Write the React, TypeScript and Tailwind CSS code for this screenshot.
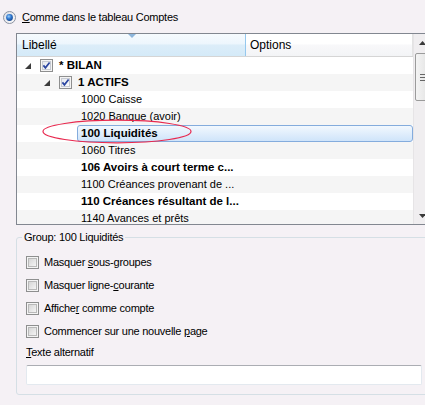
import React from "react";

type Row = {
  level: number;
  label: string;
  bold?: boolean;
  expander?: boolean;
  check?: boolean;
  selected?: boolean;
};

const rows: Row[] = [
  { level: 0, label: "* BILAN", bold: true, expander: true, check: true },
  { level: 1, label: "1 ACTIFS", bold: true, expander: true, check: true },
  { level: 2, label: "1000 Caisse" },
  { level: 2, label: "1020 Banque (avoir)" },
  { level: 2, label: "100 Liquidités", bold: true, selected: true },
  { level: 2, label: "1060 Titres" },
  { level: 2, label: "106 Avoirs à court terme c...", bold: true },
  { level: 2, label: "1100 Créances provenant de ..." },
  { level: 2, label: "110 Créances résultant de l...", bold: true },
  { level: 2, label: "1140 Avances et prêts" },
];

const FONT = { fontFamily: '"Liberation Sans", Arial, sans-serif' };

function Expander() {
  return (
    <svg width="6" height="6" viewBox="0 0 6 6" className="shrink-0">
      <path d="M6 0 L6 6 L0 6 Z" fill="#3c3c3c" />
    </svg>
  );
}

function TreeCheck() {
  return (
    <svg width="13" height="13" viewBox="0 0 13 13" className="shrink-0">
      <defs>
        <linearGradient id="tcg" x1="0" y1="0" x2="1" y2="1">
          <stop offset="0" stopColor="#e4e7ee" />
          <stop offset="1" stopColor="#fbfbfc" />
        </linearGradient>
      </defs>
      <rect x="0.5" y="0.5" width="12" height="12" fill="#f4f4f4" stroke="#8e8f8f" />
      <rect x="2.5" y="2.5" width="8" height="8" fill="url(#tcg)" stroke="#c6cad2" />
      <path d="M3.4 6.4 L5.4 8.8 L9.6 3.4" fill="none" stroke="#2a45a0" strokeWidth="1.7" />
    </svg>
  );
}

function Box() {
  return (
    <svg width="13" height="13" viewBox="0 0 13 13" className="shrink-0">
      <defs>
        <linearGradient id="bxg" x1="0" y1="0" x2="1" y2="1">
          <stop offset="0" stopColor="#d4d4d4" />
          <stop offset="1" stopColor="#f6f6f6" />
        </linearGradient>
      </defs>
      <rect x="0.5" y="0.5" width="12" height="12" fill="#f4f4f4" stroke="#8e8f8f" />
      <rect x="2.5" y="2.5" width="8" height="8" fill="url(#bxg)" stroke="#b9b9b9" />
    </svg>
  );
}

function Radio() {
  return (
    <svg width="13" height="13" viewBox="0 0 13 13" className="shrink-0">
      <defs>
        <radialGradient id="rdg" cx="0.4" cy="0.35" r="0.7">
          <stop offset="0" stopColor="#9cd0fb" />
          <stop offset="0.5" stopColor="#2f78d0" />
          <stop offset="1" stopColor="#18458c" />
        </radialGradient>
        <linearGradient id="rog" x1="0" y1="0" x2="1" y2="1">
          <stop offset="0" stopColor="#dcdfe6" />
          <stop offset="1" stopColor="#fbfbfb" />
        </linearGradient>
      </defs>
      <circle cx="6.5" cy="6.5" r="6" fill="url(#rog)" stroke="#8a92a0" />
      <circle cx="6.5" cy="6.5" r="3.4" fill="url(#rdg)" />
    </svg>
  );
}

export default function App() {
  return (
    <div
      className="relative w-[425px] h-[405px] overflow-hidden bg-[#f5f1f5] text-black flex flex-col"
      style={FONT}
    >
      {/* radio row */}
      <div className="h-[33px] flex items-start pt-[11px] pl-[3px] shrink-0">
        <Radio />
        <span className="ml-[6px] text-[11px] leading-[13px] tracking-[-0.25px]">
          <span className="underline">C</span>omme dans le tableau Comptes
        </span>
      </div>

      {/* list */}
      <div className="ml-[16px] w-[415px] h-[192px] shrink-0 border border-[#828790] bg-white flex">
        <div className="w-[396px] flex flex-col overflow-hidden">
          <div className="h-[23px] shrink-0 flex border-b border-[#d5d5d5] text-[12px]">
            <div className="relative w-[229px] flex items-center pl-[5px] border-r border-[#95c8ee] bg-[linear-gradient(to_bottom,#f6fbfe_0%,#edf6fd_45%,#dcedf9_50%,#d4eaf8_100%)]">
              <svg width="8" height="4" viewBox="0 0 8 4" className="absolute left-[111px] top-0">
                <path d="M0 0 L8 0 L4 4 Z" fill="#8db6dc" />
              </svg>
              Libellé
            </div>
            <div className="flex-1 flex items-center pl-[4px] border-r border-[#e3e3e3] bg-[linear-gradient(to_bottom,#ffffff_0%,#ffffff_45%,#f8f8fa_50%,#f3f4f6_100%)]">
              Options
            </div>
          </div>
          {rows.map((r, i) => {
            const bg = i % 2 === 0 ? "bg-white" : "bg-[#f5f5f5]";
            if (r.level < 2) {
              return (
                <div
                  key={i}
                  className={`h-[17px] shrink-0 flex items-center ${bg} ${
                    r.level === 0 ? "pl-[8px]" : "pl-[27px]"
                  }`}
                >
                  <Expander />
                  <span className="ml-[9px]">
                    <TreeCheck />
                  </span>
                  <span className="ml-[6px] text-[11.5px] font-bold leading-[17px] whitespace-nowrap">
                    {r.label}
                  </span>
                </div>
              );
            }
            return (
              <div key={i} className={`h-[17px] shrink-0 flex ${bg} pl-[60px]`}>
                <div
                  className={`flex-1 flex items-center pl-[3px] border whitespace-nowrap ${
                    r.selected
                      ? "rounded-[3px] border-[#84acdd] bg-[linear-gradient(to_bottom,#f2f8fe,#cfe4fa)]"
                      : "border-transparent"
                  } ${r.bold ? "text-[11.5px] font-bold" : "text-[11px]"}`}
                >
                  {r.label}
                </div>
              </div>
            );
          })}
        </div>
        {/* scrollbar */}
        <div className="w-[17px] shrink-0 flex flex-col bg-[#f0eef0] border-l border-[#e6e4e6]">
          <div className="h-[17px] flex items-center justify-center">
            <svg width="7" height="4" viewBox="0 0 7 4">
              <path d="M0 4 L3.5 0 L7 4 Z" fill="#3a3a3a" />
            </svg>
          </div>
          <div className="mt-[2px] ml-[1px] w-[15px] h-[48px] rounded-[2px] border border-[#9b9b9b] bg-[linear-gradient(to_right,#f4f4f4,#e2e2e2)] flex flex-col items-center justify-center gap-[2px]">
            <div className="w-[6px] h-px bg-[#666]" />
            <div className="w-[6px] h-px bg-[#666]" />
            <div className="w-[6px] h-px bg-[#666]" />
          </div>
          <div className="flex-1" />
          <div className="h-[17px] flex items-center justify-center">
            <svg width="7" height="4" viewBox="0 0 7 4">
              <path d="M0 0 L7 0 L3.5 4 Z" fill="#3a3a3a" />
            </svg>
          </div>
        </div>
      </div>

      {/* group box */}
      <fieldset className="mt-[6px] ml-[16px] w-[415px] shrink-0 border border-[#d5dfe5] rounded-[3px] px-[9px] pb-[9px] text-[11px] tracking-[-0.25px]">
        <legend className="ml-[-4px] px-[2px] leading-[13px]">Group: 100 Liquidités</legend>
        <div className="pt-[7px] flex flex-col">
          <div className="h-[23px] flex items-center">
            <Box />
            <span className="ml-[5px]">
              Masquer <span className="underline">s</span>ous-groupes
            </span>
          </div>
          <div className="h-[23px] flex items-center">
            <Box />
            <span className="ml-[5px]">
              Masquer ligne-<span className="underline">c</span>ourante
            </span>
          </div>
          <div className="h-[23px] flex items-center">
            <Box />
            <span className="ml-[5px]">
              Affiche<span className="underline">r</span> comme compte
            </span>
          </div>
          <div className="h-[23px] flex items-center">
            <Box />
            <span className="ml-[5px]">
              Commencer sur une nouvelle <span className="underline">p</span>age
            </span>
          </div>
          <div className="mt-[3px] h-[13px] leading-[13px]">
            <span className="underline">T</span>exte alternatif
          </div>
          <div className="mt-[6px] w-[396px] h-[20px] bg-white rounded-[2px] border border-[#e3e9ef] border-t-[#abadb3]" />
        </div>
      </fieldset>

      {/* red annotation ellipse */}
      <svg className="absolute left-0 top-0 pointer-events-none" width="425" height="405">
        <ellipse cx="117" cy="131.5" rx="74" ry="11.3" fill="none" stroke="#e8294f" strokeWidth="1.2" />
      </svg>
    </div>
  );
}
